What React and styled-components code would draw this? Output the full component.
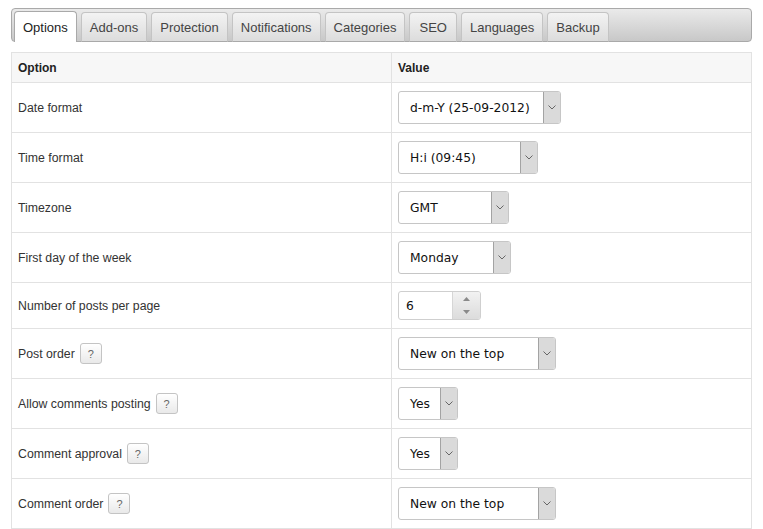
import React from "react";
import styled, { createGlobalStyle } from "styled-components";

const Global = createGlobalStyle`
  html, body { margin: 0; padding: 0; background: #fff; }
  body { font-family: "Liberation Sans", Arial, sans-serif; }
`;

const Page = styled.div`
  padding: 8px 11px;
  width: 741px;
`;

const TabBar = styled.div`
  height: 32px;
  border: 1px solid #a9a9a9;
  border-radius: 4px;
  background: linear-gradient(#eaeaea, #c8c8c8);
  display: flex;
  align-items: flex-end;
  gap: 4px;
  padding: 0 2px;
  box-sizing: content-box;
`;

const Tab = styled.div`
  margin-bottom: -1px;
  padding: 0 ${(p) => p.$pad || 8}px;
  display: flex;
  align-items: center;
  font-size: 13px;
  color: ${(p) => (p.$active ? "#222" : "#444")};
  border: 1px solid ${(p) => (p.$active ? "#a9a9a9" : "#c4c4c4")};
  border-bottom: ${(p) => (p.$active ? "none" : "1px solid #a9a9a9")};
  border-radius: 4px 4px 0 0;
  background: ${(p) =>
    p.$active ? "#fff" : "linear-gradient(#f3f3f3, #dcdcdc)"};
  height: ${(p) => (p.$active ? "30px" : "28px")};
`;

const Table = styled.table`
  margin-top: 10px;
  width: 741px;
  border-collapse: collapse;
  border: 1px solid #dedede;
  font-size: 12.3px;
  color: #333;
`;

const Th = styled.th`
  height: 29px;
  padding: 0 6px;
  text-align: left;
  font-weight: bold;
  font-size: 12px;
  background: #f7f7f7;
  color: #222;
  border: 1px solid #e2e2e2;
  width: ${(p) => p.$w || "auto"};
`;

const Td = styled.td`
  padding: 8px 6px;
  border: 1px solid #e2e2e2;
  vertical-align: middle;
`;

const Label = styled.div`
  display: flex;
  align-items: center;
  gap: 5px;
`;

const Help = styled.span`
  display: inline-flex;
  align-items: center;
  justify-content: center;
  width: 22px;
  height: 21px;
  box-sizing: border-box;
  border: 1px solid #c4c4c4;
  border-radius: 3px;
  background: linear-gradient(#ffffff, #e9e9e9);
  color: #666;
  font-size: 11px;
`;

const SelectBox = styled.div`
  display: flex;
  width: ${(p) => p.$w}px;
  height: 33px;
  box-sizing: border-box;
  border: 1px solid #c6c6c6;
  border-radius: 3px;
  background: #fff;
  font-family: "DejaVu Sans", Verdana, sans-serif;
  font-size: 12.3px;
  color: #111;
  overflow: hidden;
`;

const SelectText = styled.span`
  flex: 1;
  display: flex;
  align-items: center;
  padding-left: 11px;
  white-space: nowrap;
`;

const Arrow = styled.span`
  width: 16px;
  display: flex;
  align-items: center;
  justify-content: center;
  background: #dadada;
  border-left: 1px solid #a3a3a3;
`;

const NumberBox = styled.div`
  display: flex;
  width: 83px;
  height: 29px;
  box-sizing: border-box;
  border: 1px solid #cfcfcf;
  border-radius: 3px;
  overflow: hidden;
  font-family: "DejaVu Sans", Verdana, sans-serif;
  font-size: 12.3px;
  color: #111;
`;

const NumberText = styled.span`
  flex: 1;
  display: flex;
  align-items: center;
  padding-left: 7px;
`;

const Spinner = styled.span`
  width: 27px;
  border-left: 1px solid #d6d6d6;
  display: flex;
  flex-direction: column;
`;

const SpinHalf = styled.span`
  flex: 1;
  display: flex;
  align-items: center;
  justify-content: center;
  background: ${(p) =>
    p.$up ? "linear-gradient(#f2f2f2, #e6e6e6)" : "linear-gradient(#e6e6e6, #dcdcdc)"};
`;

const Chevron = () => (
  <svg width="8" height="5" viewBox="0 0 8 5">
    <path d="M0.5 0.5 L4 4 L7.5 0.5" fill="none" stroke="#666" strokeWidth="1" />
  </svg>
);

const Tri = ({ up }) => (
  <svg width="7" height="4" viewBox="0 0 7 4">
    <path d={up ? "M0 4 L3.5 0 L7 4 Z" : "M0 0 L3.5 4 L7 0 Z"} fill="#8a8a8a" />
  </svg>
);

const Select = ({ value, w }) => (
  <SelectBox $w={w}>
    <SelectText>{value}</SelectText>
    <Arrow>
      <Chevron />
    </Arrow>
  </SelectBox>
);

const tabs = [
  { t: "Options", active: true },
  { t: "Add-ons" },
  { t: "Protection" },
  { t: "Notifications" },
  { t: "Categories" },
  { t: "SEO", pad: 9 },
  { t: "Languages" },
  { t: "Backup" },
];

const rows = [
  { label: "Date format", sel: "d-m-Y (25-09-2012)", w: 163 },
  { label: "Time format", sel: "H:i (09:45)", w: 140 },
  { label: "Timezone", sel: "GMT", w: 111 },
  { label: "First day of the week", sel: "Monday", w: 113 },
  { label: "Number of posts per page", num: "6" },
  { label: "Post order", help: true, sel: "New on the top", w: 158 },
  { label: "Allow comments posting", help: true, sel: "Yes", w: 60 },
  { label: "Comment approval", help: true, sel: "Yes", w: 60 },
  { label: "Comment order", help: true, sel: "New on the top", w: 158 },
];

export default function App() {
  return (
    <Page>
      <Global />
      <TabBar>
        {tabs.map((x) => (
          <Tab key={x.t} $active={x.active} $pad={x.pad}>
            {x.t}
          </Tab>
        ))}
      </TabBar>
      <Table>
        <thead>
          <tr>
            <Th $w="367px">Option</Th>
            <Th>Value</Th>
          </tr>
        </thead>
        <tbody>
          {rows.map((r) => (
            <tr key={r.label}>
              <Td>
                <Label>
                  {r.label}
                  {r.help && <Help>?</Help>}
                </Label>
              </Td>
              <Td>
                {r.num ? (
                  <NumberBox>
                    <NumberText>{r.num}</NumberText>
                    <Spinner>
                      <SpinHalf $up>
                        <Tri up />
                      </SpinHalf>
                      <SpinHalf>
                        <Tri />
                      </SpinHalf>
                    </Spinner>
                  </NumberBox>
                ) : (
                  <Select value={r.sel} w={r.w} />
                )}
              </Td>
            </tr>
          ))}
        </tbody>
      </Table>
    </Page>
  );
}
